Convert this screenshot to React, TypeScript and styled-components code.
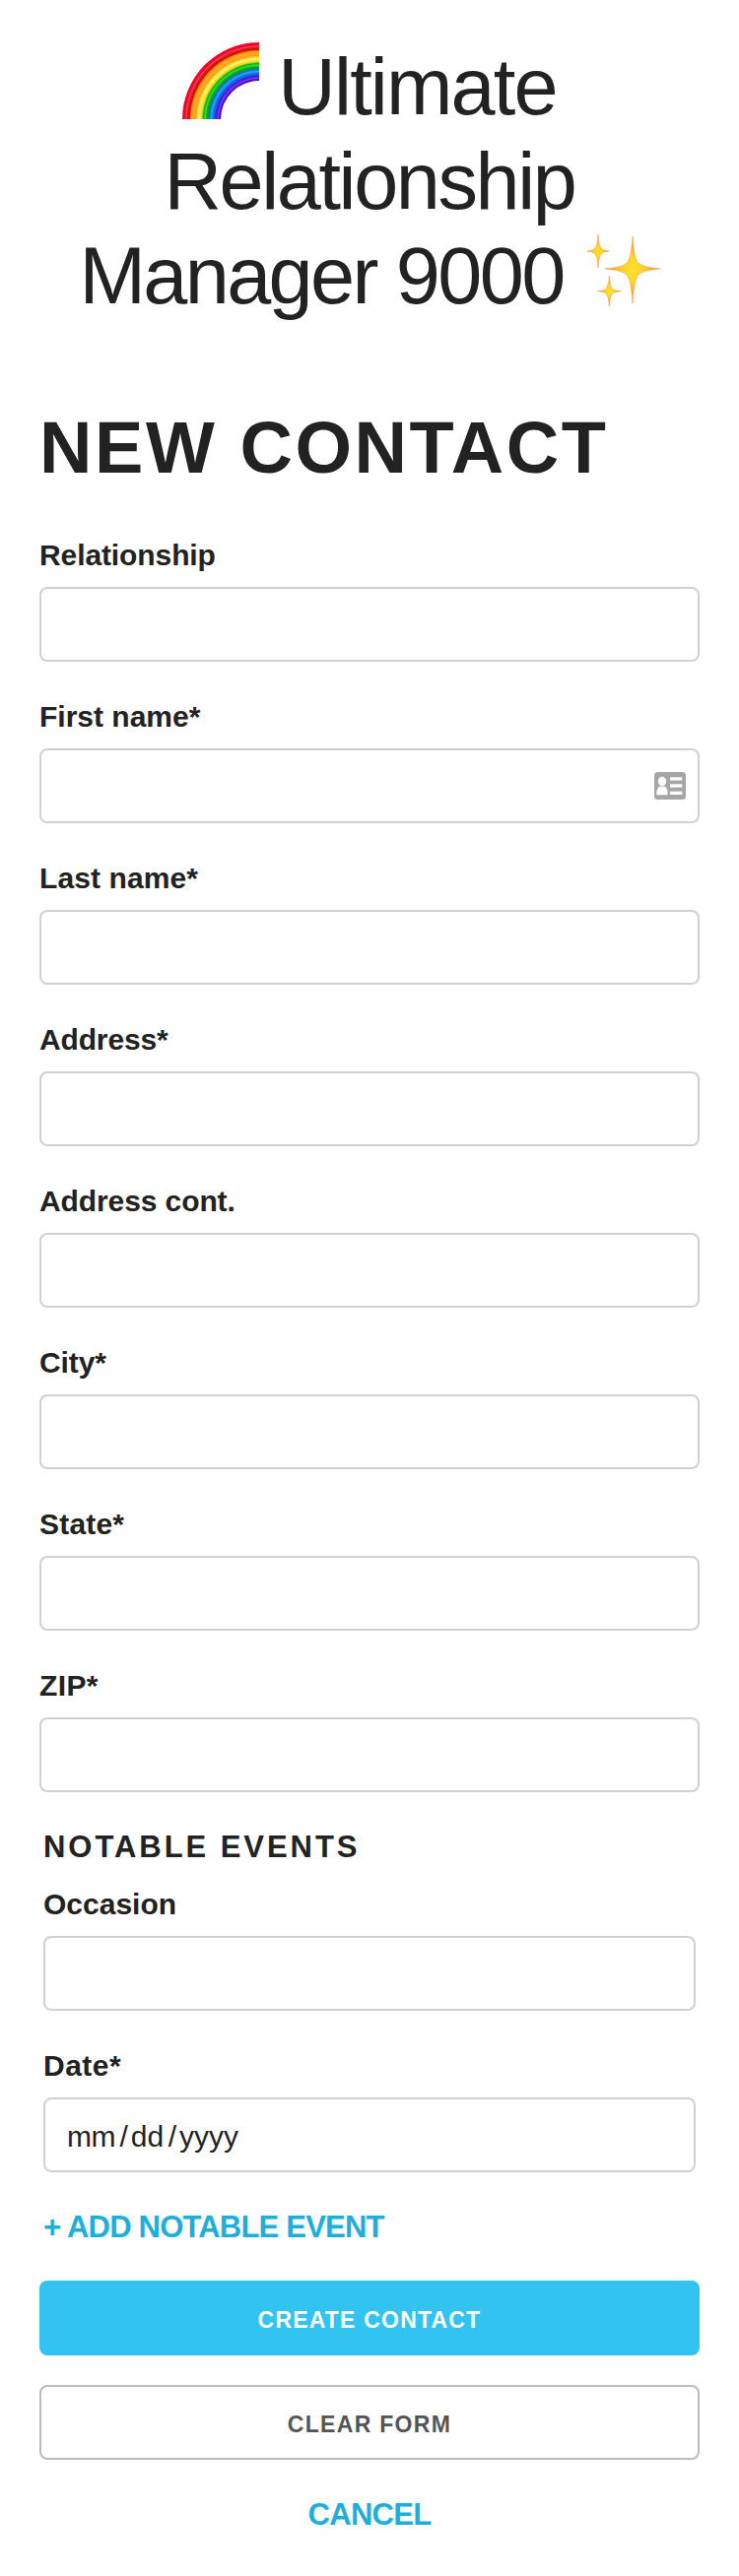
import React from "react";
import styled, { createGlobalStyle, css } from "styled-components";

const GlobalStyle = createGlobalStyle`
  *, *::before, *::after { box-sizing: border-box; }
  body {
    margin: 0;
    background: #fff;
    color: #222;
    font-family: "Liberation Sans", Arial, Helvetica, sans-serif;
    font-size: 30px;
  }
`;

const Page = styled.main`
  display: flex;
  flex-direction: column;
  padding: 40px 40px 0;
  min-height: 2616px;
`;

const Title = styled.h1`
  margin: 0;
  font-size: 81px;
  line-height: 96px;
  font-weight: 400;
`;

const TitleLine = styled.span<{ $spacing: number; $indent?: number }>`
  display: flex;
  justify-content: center;
  align-items: flex-start;
  height: 96px;
  white-space: nowrap;
  letter-spacing: ${(p) => p.$spacing}px;
  padding-left: ${(p) => p.$indent ?? 0}px;
`;

const RainbowArt = styled.svg`
  flex: none;
  width: 78px;
  height: 78px;
  margin: 3px 19px 0 0;
`;

const SparkleArt = styled.svg`
  flex: none;
  width: 78px;
  height: 78px;
  margin: 4px 0 0 22px;
`;

const SectionTitle = styled.h2`
  margin: 82px 0 0;
  height: 90px;
  font-size: 74px;
  line-height: 90px;
  font-weight: 700;
  letter-spacing: 2.55px;
  white-space: nowrap;
`;

const Form = styled.form`
  display: flex;
  flex-direction: column;
  padding-top: 40px;
`;

const FieldGroup = styled.label`
  display: flex;
  flex-direction: column;
  height: 164px;
`;

const Caption = styled.span<{ $spacing?: number }>`
  height: 56px;
  line-height: 48px;
  font-weight: 700;
  letter-spacing: ${(p) => p.$spacing ?? 0}px;
`;

const fieldBox = css`
  display: block;
  width: 100%;
  height: 76px;
  border: 2px solid #d1d1d1;
  border-radius: 8px;
  background: #fff;
`;

const TextInput = styled.input`
  ${fieldBox}
  padding: 12px 20px;
  font: inherit;
  color: inherit;
  outline: none;
`;

const InputFrame = styled.span`
  position: relative;
  display: block;
`;

const CardBadge = styled.svg`
  position: absolute;
  right: 14px;
  top: 24px;
  width: 32px;
  height: 28px;
`;

const Events = styled.fieldset`
  display: flex;
  flex-direction: column;
  margin: 0;
  padding: 0 4px;
  border: 0;
  min-width: 0;
`;

const EventsTitle = styled.div`
  height: 58px;
  font-size: 31px;
  line-height: 48px;
  font-weight: 700;
  letter-spacing: 2.95px;
`;

const DateBox = styled.span`
  ${fieldBox}
  display: flex;
  align-items: center;
  padding: 4px 22px 0;
`;

const DatePart = styled.span<{ $spacing?: number }>`
  letter-spacing: ${(p) => p.$spacing ?? 0}px;
`;

const DateSlash = styled.span`
  margin: 0 3px 0 4.5px;
`;

const TextLink = styled.a<{ $centered?: boolean; $spacing: number }>`
  align-self: ${(p) => (p.$centered ? "center" : "flex-start")};
  height: 48px;
  margin-top: ${(p) => (p.$centered ? 2 : 0)}px;
  font-size: 31px;
  line-height: 48px;
  font-weight: 700;
  letter-spacing: ${(p) => p.$spacing}px;
  color: #1eaedb;
  text-decoration: none;
  white-space: nowrap;
`;

const Button = styled.button<{ $primary?: boolean; $spacing: number }>`
  width: 100%;
  height: 76px;
  margin: 0 0 30px;
  padding: 4px 0 0;
  border: 2px solid ${(p) => (p.$primary ? "#33c3f0" : "#bbb")};
  border-radius: 8px;
  background: ${(p) => (p.$primary ? "#33c3f0" : "#fff")};
  color: ${(p) => (p.$primary ? "#fff" : "#555")};
  font-family: inherit;
  font-size: 23px;
  font-weight: 700;
  letter-spacing: ${(p) => p.$spacing}px;
  text-align: center;
`;

const Actions = styled.div`
  display: flex;
  flex-direction: column;
  padding-top: 30px;
`;

function Rainbow() {
  return (
    <RainbowArt viewBox="0 0 78 78" aria-label="rainbow">
      <defs>
        <radialGradient id="arc" gradientUnits="userSpaceOnUse" cx="78" cy="78" r="78">
          <stop offset="0.5" stopColor="#5a00b8" />
          <stop offset="0.515" stopColor="#5208d0" />
          <stop offset="0.535" stopColor="#7440ec" />
          <stop offset="0.56" stopColor="#4410d4" />
          <stop offset="0.575" stopColor="#1058e4" />
          <stop offset="0.605" stopColor="#0880f8" />
          <stop offset="0.62" stopColor="#3ca0ff" />
          <stop offset="0.645" stopColor="#0870e8" />
          <stop offset="0.655" stopColor="#049048" />
          <stop offset="0.68" stopColor="#00b010" />
          <stop offset="0.7" stopColor="#38d838" />
          <stop offset="0.725" stopColor="#10b400" />
          <stop offset="0.745" stopColor="#d8d820" />
          <stop offset="0.765" stopColor="#ffe438" />
          <stop offset="0.785" stopColor="#fff478" />
          <stop offset="0.81" stopColor="#ffd030" />
          <stop offset="0.825" stopColor="#ff9c08" />
          <stop offset="0.86" stopColor="#ffac2c" />
          <stop offset="0.89" stopColor="#ff8400" />
          <stop offset="0.905" stopColor="#c81410" />
          <stop offset="0.93" stopColor="#e01020" />
          <stop offset="0.95" stopColor="#f04454" />
          <stop offset="0.97" stopColor="#f40020" />
          <stop offset="1" stopColor="#f80030" />
        </radialGradient>
      </defs>
      <path d="M0 78A78 78 0 0 1 78 0V39A39 39 0 0 0 39 78Z" fill="url(#arc)" />
    </RainbowArt>
  );
}

function Sparkles() {
  return (
    <SparkleArt viewBox="0 0 78 78" aria-label="sparkles">
      <defs>
        <radialGradient id="star">
          <stop offset="0" stopColor="#ffe02c" />
          <stop offset="0.4" stopColor="#fcd42c" />
          <stop offset="0.7" stopColor="#f8a830" />
          <stop offset="1" stopColor="#f88848" />
        </radialGradient>
      </defs>
      <g fill="url(#star)" stroke="#f6a04a" strokeWidth="0.6" strokeLinejoin="round">
        <path d="M48 4C49 20 51 28 54 31C57 34 64 36 76 37C64 38 57 40 54 43C51 47 49 56 48 72C47 56 45 47 42 43C39 40 32 38 20 37C32 36 39 34 42 31C45 28 47 20 48 4Z" />
        <path d="M13 2C13.500 10 14.500 14 16 16C18 18 20 18.500 24 19C20 19.500 18 20 16 22C14.500 24 13.500 28 13 36C12.500 28 11.500 24 10 22C8 20 6 19.500 2 19C6 18.500 8 18 10 16C11.500 14 12.500 10 13 2Z" />
        <path d="M24.300 44C24.800 51 25.800 55 27.300 57C29 58.800 31 59.200 36.500 59.700C31 60.200 29 60.800 27.300 62.500C25.800 64.500 24.800 68 24.300 75C23.800 68 22.800 64.500 21.300 62.500C19.500 60.800 17.500 60.200 12.500 59.700C17.500 59.200 19.500 58.800 21.300 57C22.800 55 23.800 51 24.300 44Z" />
      </g>
    </SparkleArt>
  );
}

function ContactCard() {
  return (
    <CardBadge viewBox="0 0 32 28" aria-hidden="true">
      <rect width="32" height="28" rx="3.500" fill="#a6a6a6" />
      <g fill="#fff">
        <ellipse cx="8" cy="9.500" rx="4.200" ry="4.700" />
        <path d="M2.300 23.200C2.300 18 3.500 15.500 6 14.300Q8 15.400 10 14.300C12.500 15.500 13.700 18 13.700 23.200Z" />
        <rect x="16" y="5.300" width="12.300" height="3.300" />
        <rect x="16" y="12.300" width="12.300" height="3.300" />
        <rect x="16" y="19.700" width="12.300" height="3.300" />
      </g>
    </CardBadge>
  );
}

interface FieldProps {
  label: string;
  spacing?: number;
  badge?: React.ReactNode;
}

function Field({ label, spacing, badge }: FieldProps) {
  return (
    <FieldGroup>
      <Caption $spacing={spacing}>{label}</Caption>
      <InputFrame>
        <TextInput type="text" />
        {badge}
      </InputFrame>
    </FieldGroup>
  );
}

export default function App() {
  return (
    <>
      <GlobalStyle />
      <Page>
        <Title>
          <TitleLine $spacing={-1.85}>
            <Rainbow />
            Ultimate
          </TitleLine>
          <TitleLine $spacing={-2.4}>Relationship</TitleLine>
          <TitleLine $spacing={-2.6} $indent={2}>
            Manager 9000
            <Sparkles />
          </TitleLine>
        </Title>
        <SectionTitle>NEW CONTACT</SectionTitle>
        <Form>
          <Field label="Relationship" spacing={-0.1} />
          <Field label="First name*" badge={<ContactCard />} />
          <Field label="Last name*" spacing={0.1} />
          <Field label="Address*" spacing={-0.15} />
          <Field label="Address cont." spacing={-0.1} />
          <Field label="City*" spacing={-0.1} />
          <Field label="State*" spacing={0.2} />
          <Field label="ZIP*" spacing={0.4} />
          <Events>
            <EventsTitle>NOTABLE EVENTS</EventsTitle>
            <Field label="Occasion" />
            <FieldGroup as="div">
              <Caption $spacing={0.5}>Date*</Caption>
              <DateBox>
                <DatePart $spacing={-0.5}>mm</DatePart>
                <DateSlash>/</DateSlash>
                <DatePart>dd</DatePart>
                <DateSlash>/</DateSlash>
                <DatePart>yyyy</DatePart>
              </DateBox>
            </FieldGroup>
            <TextLink href="#" $spacing={-0.8}>
              + ADD NOTABLE EVENT
            </TextLink>
          </Events>
          <Actions>
            <Button type="button" $primary $spacing={1.2}>
              CREATE CONTACT
            </Button>
            <Button type="button" $spacing={1.3}>
              CLEAR FORM
            </Button>
            <TextLink href="#" $centered $spacing={-0.7}>
              CANCEL
            </TextLink>
          </Actions>
        </Form>
      </Page>
    </>
  );
}
